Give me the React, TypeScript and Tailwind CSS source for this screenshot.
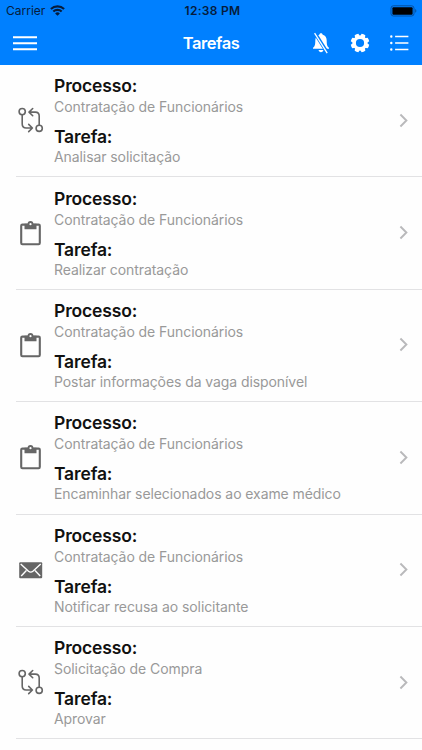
import React from 'react';

type TaskKind = "flow" | "clipboard" | "mail";

interface Task {
    kind: TaskKind;
    process: string;
    name: string;
}

const tasks: Task[] = [
    { kind: "flow", process: "Contratação de Funcionários", name: "Analisar solicitação" },
    { kind: "clipboard", process: "Contratação de Funcionários", name: "Realizar contratação" },
    { kind: "clipboard", process: "Contratação de Funcionários", name: "Postar informações da vaga disponível" },
    { kind: "clipboard", process: "Contratação de Funcionários", name: "Encaminhar selecionados ao exame médico" },
    { kind: "mail", process: "Contratação de Funcionários", name: "Notificar recusa ao solicitante" },
    { kind: "flow", process: "Solicitação de Compra", name: "Aprovar" },
];

// Angles of the gear lobes
const lobes = [0, 45, 90, 135, 180, 225, 270, 315];

const FlowIcon = () => (
    <svg width="26" height="26" viewBox="0 0 26 26" fill="none" stroke="#666" strokeWidth="1.6" strokeLinecap="round" strokeLinejoin="round">
        <circle cx="4.2" cy="4.6" r="3.1" />
        <circle cx="21.2" cy="21.3" r="3.1" />
        <path d="M4.2 7.7v9.4c0 2.6 1.3 3.9 3.9 3.9h6.2M10.7 17.4l3.7 3.6-3.7 3.6" />
        <path d="M21.2 18.2V9c0-2.6-1.3-3.9-3.9-3.9h-6.2M14.7 1.5L11 5.1l3.7 3.6" />
    </svg>
);

const ClipboardIcon = () => (
    <svg width="26" height="26" viewBox="0 0 26 26" fill="none">
        <rect x="3.2" y="4.6" width="18.6" height="19.6" rx="1.2" stroke="#666" strokeWidth="2.1" />
        <path d="M6.5 3.8h3.1a2.9 2.9 0 0 1 5.8 0h3.1v5.4h-12z" fill="#666" />
        <circle cx="12.5" cy="4.2" r="1.1" fill="#fff" />
    </svg>
);

const MailIcon = () => (
    <svg width="26" height="26" viewBox="0 0 26 26" fill="none">
        <rect x="1.2" y="5.3" width="23" height="16" rx="1" fill="#666" />
        <path d="M2.7 7.1l7.8 7.1c1.4 1.2 3 1.2 4.4 0l7.8-7.1M3.2 19.1l5.2-5.6M22.2 19.1l-5.2-5.6" stroke="#fff" strokeWidth="1.4" />
    </svg>
);

const TaskIcon = ({ kind }: { kind: TaskKind }) => {
    if (kind === "flow") return <FlowIcon />;
    if (kind === "clipboard") return <ClipboardIcon />;
    return <MailIcon />;
};

const StatusBar = () => (
    <div className="grid h-[21px] grid-cols-3 items-center text-[#061c3c]">
        <div className="flex items-center gap-[5px] pl-1.5">
            <span className="text-[12px] leading-[21px]">Carrier</span>
            <svg width="15" height="11" viewBox="0 0 15 11" fill="none" stroke="currentColor" strokeWidth="2.1">
                <path d="M.9 4.1a9.4 9.4 0 0 1 13.2 0M3.3 6.6a6 6 0 0 1 8.4 0" />
                <path d="M7.5 10.8L5.1 8.4a3.4 3.4 0 0 1 4.8 0z" fill="currentColor" stroke="none" />
            </svg>
        </div>
        <span className="pl-[3px] text-center text-[12px] leading-[21px] font-semibold tracking-[0.3px] whitespace-nowrap">12:38 PM</span>
        <div className="flex justify-end pr-[5px]">
            <svg width="27" height="12" viewBox="0 0 27 12">
                <rect x="1" y=".8" width="23" height="10.2" rx="2.4" fill="none" stroke="#0450a0" strokeWidth="1" />
                <rect x="2.4" y="2.3" width="20.2" height="7.4" rx="1" fill="#000" />
                <path d="M25.2 4c1.6.6 1.6 3.2 0 3.8z" fill="#0450a0" />
            </svg>
        </div>
    </div>
);

const NavBar = () => (
    <div className="grid h-11 grid-cols-3 items-center text-white">
        <svg className="ml-[13px]" width="24" height="16" viewBox="0 0 24 16" stroke="currentColor" strokeWidth="2.1">
            <path d="M0 2.3h24M0 8.3h24M0 14.3h24" />
        </svg>
        <h1 className="text-center text-[16.5px] leading-[22px] font-semibold tracking-[-0.45px]">Tarefas</h1>
        <div className="flex items-center justify-end gap-[20px] pr-[13px]">
            <svg width="18" height="22" viewBox="0 0 18 22" fill="currentColor">
                <path d="M9 1.2c1 0 1.6.6 1.7 1.5 2.7.7 4 2.8 4 5.8 0 4.6.5 5.8 2.3 7.3v1H1v-1c1.8-1.5 2.3-2.7 2.3-7.3 0-3 1.3-5.1 4-5.8.1-.9.7-1.5 1.7-1.5zM6.6 18h4.8c-.2 1.4-1.1 2.2-2.4 2.2S6.8 19.4 6.6 18z" />
                <path d="M3.2 1.5l12 19" stroke="#0080ff" strokeWidth="3.4" />
                <path d="M2.6 1.2l12.6 20" stroke="currentColor" strokeWidth="1.3" />
            </svg>
            <svg width="20" height="20" viewBox="0 0 20 20">
                <circle cx="10" cy="10" r="5.8" fill="none" stroke="currentColor" strokeWidth="3.4" />
                {lobes.map((angle) => (
                    <path key={angle} d="M7.3 4L8 .9q2-.5 4 0L12.7 4z" fill="currentColor" transform={`rotate(${angle + 22.5} 10 10)`} />
                ))}
            </svg>
            <svg width="19" height="16" viewBox="0 0 19 16" stroke="currentColor" strokeWidth="1.6">
                <path d="M5.1 1.5h13.3M5.1 8h13.3M5.1 14.5h13.3" />
                <path d="M1.3 1.5h.01M1.3 8h.01M1.3 14.5h.01" strokeWidth="2.4" strokeLinecap="round" />
            </svg>
        </div>
    </div>
);

const TaskRow = ({ task }: { task: Task }) => (
    <li className="flex h-[112.4px] pl-4">
        <div className="flex w-full items-center border-b border-[#e2e2e4]">
            <div className="mb-px w-[38px] pl-[1.5px]">
                <TaskIcon kind={task.kind} />
            </div>
            <div className="flex-1 whitespace-nowrap">
                <h2 className="text-[17.5px] leading-[22px] font-semibold tracking-[-0.15px] text-[#111]">Processo:</h2>
                <p className="text-[14px] leading-[19px] tracking-[-0.07px] text-[#999]">{task.process}</p>
                <h2 className="mt-[10px] text-[17.5px] leading-[22px] font-semibold tracking-[-0.15px] text-[#111]">Tarefa:</h2>
                <p className="text-[14px] leading-[18px] tracking-[-0.08px] text-[#999]">{task.name}</p>
            </div>
            <svg className="mr-[14px] mb-px" width="9" height="15" viewBox="0 0 9 15" fill="none" stroke="#b9b9bb" strokeWidth="1.9">
                <path d="M1.4 1.5l6 6-6 6" />
            </svg>
        </div>
    </li>
);

const App = () => {
    return (
        <div className="h-[750px] w-full overflow-hidden bg-[#fefefe] font-['Inter',sans-serif]">
            <header className="h-[65px] bg-[#0080ff]">
                <StatusBar />
                <NavBar />
            </header>
            <ul>
                {tasks.map((task, index) => (
                    <TaskRow key={index} task={task} />
                ))}
            </ul>
        </div>
    );
};

export default App;
